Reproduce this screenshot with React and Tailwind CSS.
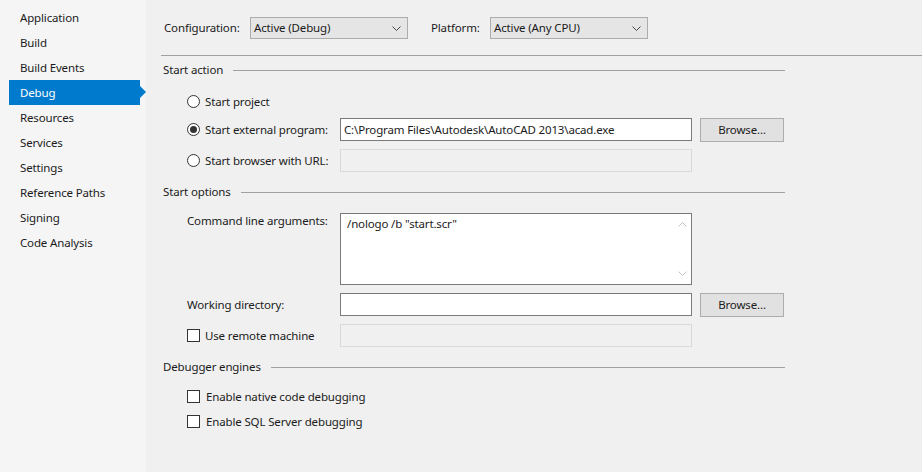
import { useState } from "react";

const navItems = [
  "Application",
  "Build",
  "Build Events",
  "Debug",
  "Resources",
  "Services",
  "Settings",
  "Reference Paths",
  "Signing",
  "Code Analysis",
];

const Chevron = ({ up = false, className = "" }) => (
  <svg width="9" height="5" viewBox="0 0 9 5" className={className}>
    <path
      d={up ? "M0.5 4.5 L4.5 0.5 L8.5 4.5" : "M0.5 0.5 L4.5 4.5 L8.5 0.5"}
      fill="none"
      stroke="currentColor"
      strokeWidth="1"
    />
  </svg>
);

const Select = ({ value }) => (
  <div className="w-[158px] h-[22px] bg-[#e5e5e5] border border-[#acacac] flex items-center justify-between pl-[3px] pr-[6px]">
    <span>{value}</span>
    <Chevron className="text-[#444]" />
  </div>
);

const Radio = ({ checked }) => (
  <span className="w-[13px] h-[13px] rounded-full border border-[#333] bg-white flex items-center justify-center shrink-0">
    {checked && <span className="w-[7px] h-[7px] rounded-full bg-[#333]" />}
  </span>
);

const Checkbox = () => (
  <span className="w-[13px] h-[13px] border border-[#333] bg-white shrink-0" />
);

const Input = ({ value, disabled }) => (
  <div
    className={
      disabled
        ? "w-[352px] h-[23px] border border-[#d9d9d9] bg-[#f0f0f0]"
        : "w-[352px] h-[23px] border border-[#7a7a7a] bg-white flex items-center pl-[3px]"
    }
  >
    {value}
  </div>
);

const Browse = () => (
  <button
    type="button"
    className="w-[84px] h-[24px] ml-[8px] bg-[#e1e1e1] border border-[#adadad] text-center"
  >
    Browse...
  </button>
);

const SectionHeader = ({ title, className = "" }) => (
  <div className={`flex items-center h-[16px] ${className}`}>
    <span className="mr-[10px]">{title}</span>
    <div className="flex-1 border-t border-[#a0a0a0]" />
  </div>
);

const App = () => {
  const [active, setActive] = useState("Debug");

  return (
    <div
      className="flex w-[922px] h-[472px] bg-[#f0f0f0] text-[11.5px] tracking-[-0.15px] text-[#1b1b1b] leading-[16px]"
      style={{ fontFamily: '"Noto Sans", sans-serif' }}
    >
      {/* left nav */}
      <div className="w-[146px] bg-[#f5f5f5] pt-[5px] shrink-0">
        {navItems.map((item) =>
          item === active ? (
            <div
              key={item}
              className="relative ml-[9px] w-[131px] h-[25px] pl-[11px] flex items-center bg-[#007acc] text-white"
            >
              {item}
              <span className="absolute right-[-6px] top-[6px] w-0 h-0 border-y-[6px] border-y-transparent border-l-[6px] border-l-[#007acc]" />
            </div>
          ) : (
            <div
              key={item}
              className="h-[25px] pl-[20px] flex items-center cursor-default"
              onClick={() => setActive(item)}
            >
              {item}
            </div>
          )
        )}
      </div>

      {/* right side */}
      <div className="flex-1">
        <div className="flex items-center pt-[17px] pl-[18px]">
          <span className="w-[86px]">Configuration:</span>
          <Select value="Active (Debug)" />
          <span className="w-[59px] ml-[23px]">Platform:</span>
          <Select value="Active (Any CPU)" />
        </div>
        <div className="mt-[16px] ml-[15px] border-t border-[#a0a0a0]" />

        <div className="w-[639px] pl-[17px]">
          <SectionHeader title="Start action" className="mt-[6px]" />

          <div className="pl-[24px]">
            <div className="flex items-center h-[23px] mt-[12px]">
              <Radio />
              <span className="ml-[5px]">Start project</span>
            </div>
            <div className="flex items-center h-[23px] mt-[5px]">
              <div className="flex items-center w-[153px]">
                <Radio checked />
                <span className="ml-[5px]">Start external program:</span>
              </div>
              <Input value="C:\Program Files\Autodesk\AutoCAD 2013\acad.exe" />
              <Browse />
            </div>
            <div className="flex items-center h-[23px] mt-[8px]">
              <div className="flex items-center w-[153px]">
                <Radio />
                <span className="ml-[5px]">Start browser with URL:</span>
              </div>
              <Input disabled />
            </div>
          </div>

          <SectionHeader title="Start options" className="mt-[12px]" />

          <div className="pl-[24px]">
            <div className="flex items-start mt-[13px]">
              <span className="w-[153px]">Command line arguments:</span>
              <div className="w-[352px] h-[72px] border border-[#7a7a7a] bg-white flex">
                <span className="flex-1 pl-[6px] pt-[2px]">/nologo /b "start.scr"</span>
                <div className="w-[17px] flex flex-col items-center justify-between py-[8px] text-[#c2c2c2]">
                  <Chevron up />
                  <Chevron />
                </div>
              </div>
            </div>
            <div className="flex items-center h-[23px] mt-[8px]">
              <span className="w-[153px]">Working directory:</span>
              <Input value="" />
              <Browse />
            </div>
            <div className="flex items-center h-[23px] mt-[8px]">
              <div className="flex items-center w-[153px]">
                <Checkbox />
                <span className="ml-[5px]">Use remote machine</span>
              </div>
              <Input disabled />
            </div>
          </div>

          <SectionHeader title="Debugger engines" className="mt-[12px]" />

          <div className="pl-[24px] mt-[9px]">
            <div className="flex items-center h-[25px]">
              <Checkbox />
              <span className="ml-[6px]">Enable native code debugging</span>
            </div>
            <div className="flex items-center h-[25px]">
              <Checkbox />
              <span className="ml-[6px]">Enable SQL Server debugging</span>
            </div>
          </div>
        </div>
      </div>
    </div>
  );
};

export default App;
